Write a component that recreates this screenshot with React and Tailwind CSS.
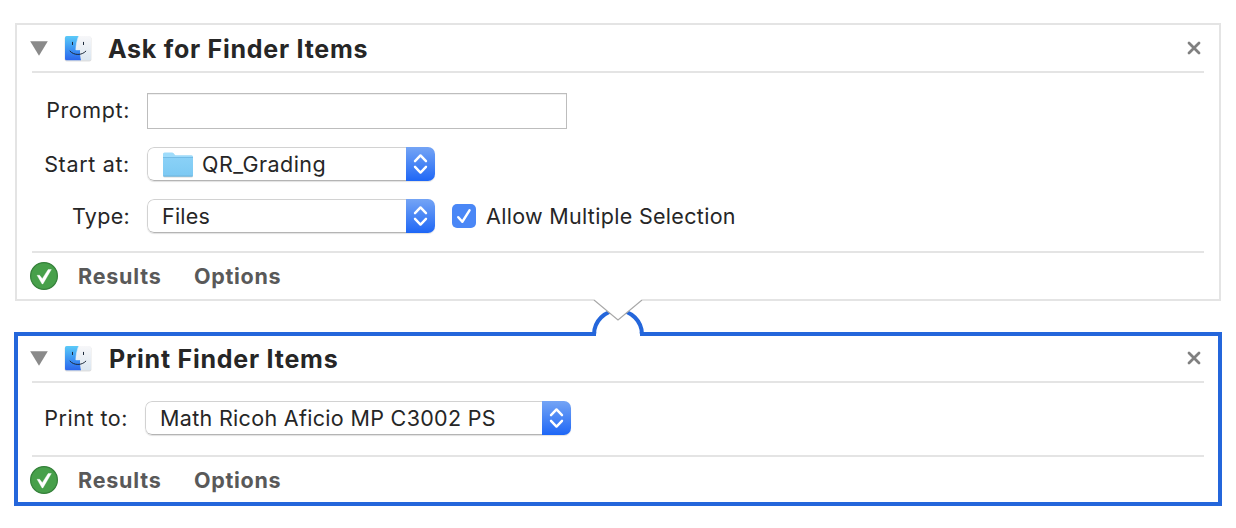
import React from "react";

function FinderIcon() {
  return (
    <svg width="30" height="28" viewBox="0 0 30 28" className="block shrink-0">
      <defs>
        <linearGradient id="finderBlue" x1="0" y1="0" x2="0" y2="1">
          <stop offset="0" stopColor="#5bcaf8" />
          <stop offset="0.5" stopColor="#3f98f3" />
          <stop offset="1" stopColor="#2b66ec" />
        </linearGradient>
        <linearGradient id="finderWhite" x1="0" y1="0" x2="0" y2="1">
          <stop offset="0" stopColor="#f7f7f9" />
          <stop offset="1" stopColor="#dbe6f0" />
        </linearGradient>
      </defs>
      <rect x="1.6" y="2.6" width="26.8" height="24.8" rx="2" fill="#000" opacity="0.13" />
      <rect x="2" y="2" width="26" height="24.3" rx="1.6" fill="url(#finderWhite)" />
      <path
        d="M3.6 2H15.6C14 6.5 13 10.8 12.8 15.9H17C16.9 19.5 17.2 23 18 26.3H3.6A1.6 1.6 0 0 1 2 24.7V3.6A1.6 1.6 0 0 1 3.6 2Z"
        fill="url(#finderBlue)"
      />
      <path d="M15.4 2.6C13.9 6.8 13 11 12.9 15.8H16.9" fill="none" stroke="#dff0fb" strokeWidth="0.6" />
      <path d="M9.5 8.3V10.6M20.5 8.3V10.6" stroke="#1d2a3b" strokeWidth="1" strokeLinecap="round" />
      <path d="M7 17.2C11 21.6 18.8 21.6 22.8 17.2" fill="none" stroke="#1d2a3b" strokeWidth="1" strokeLinecap="round" />
    </svg>
  );
}

function FolderIcon() {
  return (
    <svg width="32" height="27" viewBox="0 0 32 27" className="mt-[2px] block shrink-0">
      <defs>
        <linearGradient id="folderFront" x1="0" y1="0" x2="0" y2="1">
          <stop offset="0" stopColor="#8ad1f7" />
          <stop offset="1" stopColor="#7cc9f3" />
        </linearGradient>
      </defs>
      <path d="M1.2 2.5Q1.2 1 2.7 1H10Q11 1 11.6 1.7L12.8 3.2Q13.3 3.7 14 3.7H29.5Q31 3.7 31 5.2V24Q31 25.500 29.500 25.500H2.700Q1.200 25.500 1.200 24Z" fill="#000" opacity="0.15" />
      <path d="M1 2Q1 0.500 2.500 0.500H10Q11 0.500 11.600 1.200L12.800 2.700Q13.300 3.200 14 3.200H29.500Q31 3.200 31 4.700V10H1Z" fill="#9fdcfb" />
      <path d="M1 5.500H31V23.200Q31 24.500 29.700 24.500H2.300Q1 24.500 1 23.200Z" fill="url(#folderFront)" />
      <path d="M1 5.500H31" stroke="#74bce6" strokeWidth="1" />
      <path d="M1.500 24.100H30.500" stroke="#6fb1d6" strokeWidth="0.900" />
    </svg>
  );
}

function CloseIcon() {
  return (
    <svg width="14" height="14" viewBox="0 0 14 14" className="block">
      <path d="M2 2L12 12M12 2L2 12" stroke="#808080" strokeWidth="2.800" strokeLinecap="round" />
    </svg>
  );
}

function StatusIcon() {
  return (
    <svg width="28" height="28" viewBox="0 0 28 28" className="block shrink-0">
      <circle cx="14" cy="14" r="13.400" fill="#47a04a" stroke="#35803a" strokeWidth="1.200" />
      <path d="M7.100 13.300H9.600L12.300 16.700L18.200 7.500H21.300L12.900 21.900H12.100Z" fill="#fff" stroke="#fff" strokeWidth="0.400" strokeLinejoin="round" />
    </svg>
  );
}

function Header({ title, spacing }) {
  return (
    <header className="flex h-[45px] items-center">
      <svg width="18" height="15" viewBox="0 0 18 15" className="block shrink-0">
        <path d="M0.200 0.200H17.800L9 14.800Z" fill="#8a8a8a" />
      </svg>
      <div className="ml-[15px] pb-[2px]">
        <FinderIcon />
      </div>
      <h2 className={"pt-px text-[25px] leading-[30px] font-bold whitespace-nowrap text-[#262626] " + spacing}>
        {title}
      </h2>
      <button aria-label="Close" className="ml-auto pb-px">
        <CloseIcon />
      </button>
    </header>
  );
}

function Footer({ className }) {
  return (
    <footer className={"flex items-center pl-[30px] text-[21.5px] leading-7 font-bold text-[#595959] " + className}>
      <StatusIcon />
      <span className="ml-5 w-[116px] tracking-[0.8px]">Results</span>
      <span className="tracking-[0.7px]">Options</span>
    </footer>
  );
}

function Select({ className, children }) {
  return (
    <div className={"flex h-[34px] overflow-hidden rounded-[7px] bg-white shadow-[0_1px_1px_rgba(0,0,0,0.12)] " + className}>
      <div className="flex flex-1 items-center rounded-l-[7px] border border-r-0 border-[#d2d2d2] border-b-[#b4b4b4] pl-3.5 whitespace-nowrap">
        {children}
      </div>
      <div className="flex w-[29px] items-center justify-center bg-linear-to-b from-[#74a4f5] via-[#4a86f5] to-[#1d66f6]">
        <svg width="15" height="22" viewBox="0 0 15 22" className="block">
          <path d="M2 8.200L7.500 2.400L13 8.200M2 13.800L7.500 19.600L13 13.800" fill="none" stroke="#fff" strokeWidth="2.400" strokeLinecap="round" strokeLinejoin="round" />
        </svg>
      </div>
    </div>
  );
}

function Label({ className, children }) {
  return <span className={"shrink-0 text-right whitespace-nowrap " + className}>{children}</span>;
}

function Divider() {
  return <div className="mr-[15px] ml-8 h-[2px] bg-[#e4e4e4]" />;
}

export default function App() {
  return (
    <main className="h-[528px] w-[1236px] bg-white pt-[23px] font-['Inter',sans-serif] text-[21.5px] leading-7 text-[#262626]">
      <div className="relative">
        <section className="relative ml-[15px] h-[278px] w-[1206px] border-2 border-[#e4e4e4]">
          <div className="-ml-[17px]">
            <div className="pt-px pr-[18px] pl-[30px]">
              <Header title="Ask for Finder Items" spacing="ml-[15px] tracking-[0.74px]" />
            </div>
            <Divider />
            <div className="flex h-[178px] flex-col gap-[18px] pt-5">
              <div className="flex h-9 items-center">
                <Label className="w-[130px] pb-[2px] tracking-[0.6px]">Prompt:</Label>
                <div className="ml-[17px] h-9 w-[420px] border border-[#bdbdbd] bg-white shadow-[inset_0_1px_0_#f0f0f0]" />
              </div>
              <div className="flex h-[34px] items-center">
                <Label className="w-[130px] tracking-[0.67px]">Start at:</Label>
                <Select className="ml-[17px] w-[288px]">
                  <FolderIcon />
                  <span className="ml-2 tracking-[0.44px]">QR_Grading</span>
                </Select>
              </div>
              <div className="flex h-[34px] items-center">
                <Label className="w-[130px] tracking-[0.3px]">Type:</Label>
                <Select className="ml-[17px] w-[288px]">
                  <span className="tracking-[0.2px]">Files</span>
                </Select>
                <span className="ml-[17px] flex size-6 items-center justify-center rounded-[5px] bg-[#4a87f6]">
                  <svg width="24" height="24" viewBox="0 0 24 24" className="block">
                    <path d="M6.300 13.200L10.300 17.800L17.500 6.400" fill="none" stroke="#fff" strokeWidth="2.500" strokeLinecap="round" strokeLinejoin="round" />
                  </svg>
                </span>
                <span className="ml-2.5 tracking-[0.31px] whitespace-nowrap">Allow Multiple Selection</span>
              </div>
            </div>
            <Divider />
            <Footer className="h-[46px]" />
          </div>
        </section>

        <section className="mt-[31px] ml-[14px] h-[174px] w-[1208px] border-4 border-[#2466db]">
          <div className="-mr-px -ml-[18px]">
            <div className="pr-[18px] pl-[30px]">
              <Header title="Print Finder Items" spacing="ml-4 tracking-[0.76px]" />
            </div>
            <Divider />
            <div className="flex h-[72px] pt-[18px]">
              <div className="flex h-[34px] items-center">
                <Label className="w-[128px] tracking-[0.52px]">Print to:</Label>
                <Select className="ml-[17px] w-[426px]">
                  <span className="tracking-[0.32px]">Math Ricoh Aficio MP C3002 PS</span>
                </Select>
              </div>
            </div>
            <Divider />
            <Footer className="h-[45px] pt-px" />
          </div>
        </section>

        <svg width="56" height="42" viewBox="590 297 56 42" className="absolute top-[274px] left-[590px] block">
          <path d="M596 336.500V334.500A22 22 0 0 1 640 334.500V336.500Z" fill="#fff" />
          <path d="M594 336V334.500A24 24 0 0 1 642 334.500V336" fill="none" stroke="#2466db" strokeWidth="4" />
          <path d="M594 298.500H642V300L618 320L594 300Z" fill="#fff" />
          <path d="M594 300L618 320L642 300" fill="none" stroke="#a8a8a8" strokeWidth="1.100" />
        </svg>
      </div>
    </main>
  );
}
